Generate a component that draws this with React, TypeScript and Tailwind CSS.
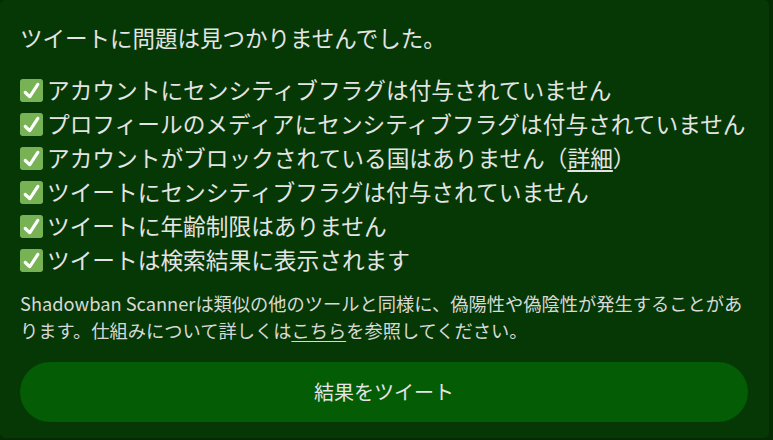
import React from 'react'

const checks = [
  'アカウントにセンシティブフラグは付与されていません',
  'プロフィールのメディアにセンシティブフラグは付与されていません',
  null,
  'ツイートにセンシティブフラグは付与されていません',
  'ツイートに年齢制限はありません',
  'ツイートは検索結果に表示されます',
]

function CheckBox() {
  return (
    <svg viewBox="0 0 36 36" className="w-[23px] h-[23px] shrink-0">
      <path
        fill="#77B255"
        d="M36 32c0 2.209-1.791 4-4 4H4c-2.209 0-4-1.791-4-4V4c0-2.209 1.791-4 4-4h28c2.209 0 4 1.791 4 4v28z"
      />
      <path
        fill="#FFF"
        d="M29.28 6.362c-1.156-.751-2.704-.422-3.458.736L14.936 23.877l-5.029-4.65c-1.014-.938-2.596-.875-3.533.138-.937 1.014-.875 2.596.139 3.533l7.209 6.666c.48.445 1.09.665 1.696.665.673 0 1.534-.282 2.099-1.139.332-.506 12.5-19.27 12.5-19.27.751-1.159.421-2.707-.737-3.458z"
      />
    </svg>
  )
}

export default function App() {
  return (
    <div className="w-[773px] h-[440px] bg-[#042b04] font-['Noto_Sans_CJK_JP',sans-serif] text-[#e4e4e4]">
      <div className="w-[769px] h-[438px] rounded-[5px] bg-[#053805] pl-5 pr-[21px] pt-[21px]">
        <h2 className="text-[22.5px] leading-[32px]">ツイートに問題は見つかりませんでした。</h2>

        <ul className="mt-[20px]">
          {checks.map((text, i) => (
            <li key={i} className="flex items-center gap-[4px] h-[34px] text-[22.7px] leading-[34px] whitespace-nowrap">
              <CheckBox />
              {text ?? (
                <span>
                  アカウントがブロックされている国はありません（<span className="underline underline-offset-[3px]">詳細</span>）
                </span>
              )}
            </li>
          ))}
        </ul>

        <p className="mt-[13px] text-[18.25px] leading-[27px] text-[#d8d8d8] whitespace-nowrap">
          <span className="font-['Liberation_Sans_Narrow','Noto_Sans_CJK_JP',sans-serif]">Shadowban Scanner</span>
          は類似の他のツールと同様に、偽陽性や偽陰性が発生することがあ
          <br />
          ります。仕組みについて詳しくは
          <span className="underline underline-offset-[3px]">こちら</span>
          を参照してください。
        </p>

        <button className="mt-[18px] w-[728px] h-[60px] rounded-full bg-[#045c04] text-[20px] text-[#e4e4e4]">
          結果をツイート
        </button>
      </div>
    </div>
  )
}
